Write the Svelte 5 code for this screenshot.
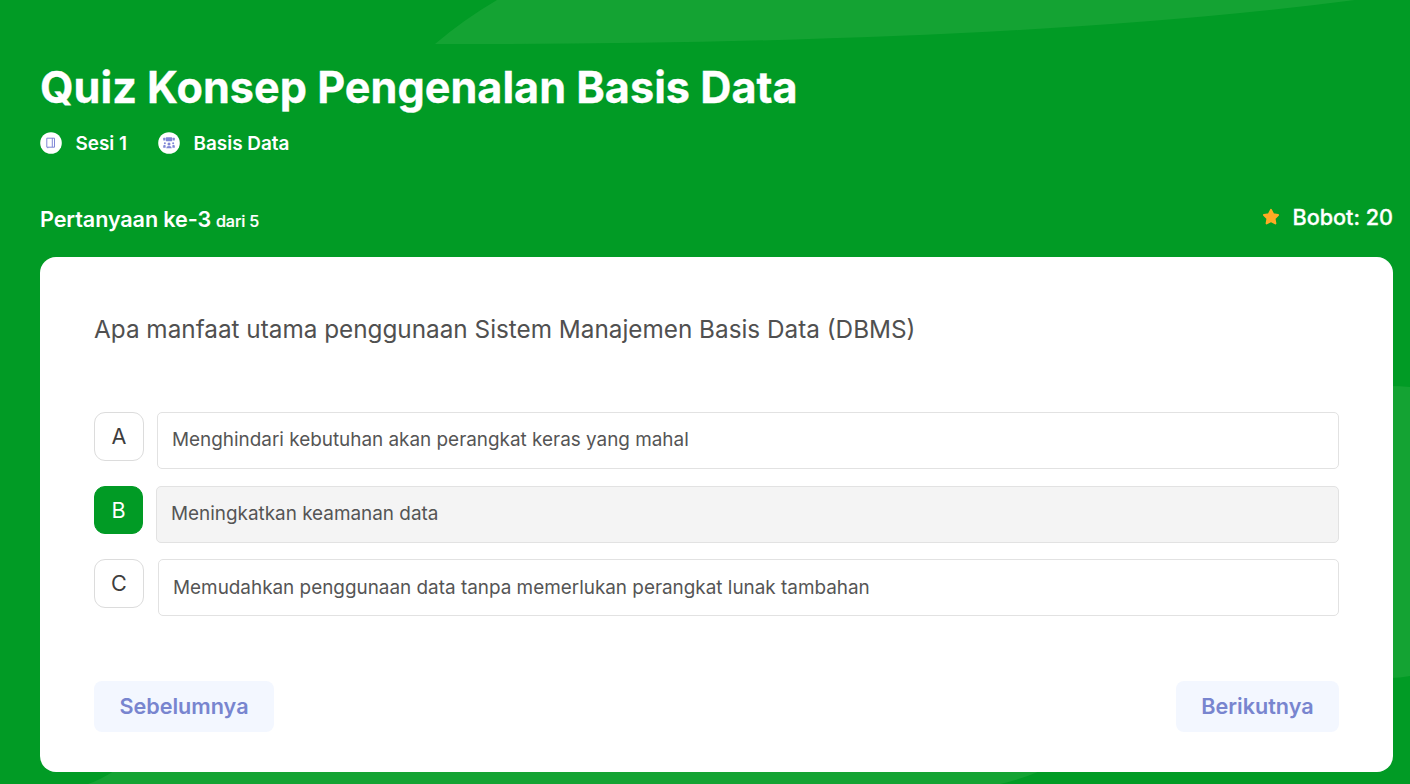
<script>
  const options = [
    { key: 'A', text: 'Menghindari kebutuhan akan perangkat keras yang mahal' },
    { key: 'B', text: 'Meningkatkan keamanan data' },
    { key: 'C', text: 'Memudahkan penggunaan data tanpa memerlukan perangkat lunak tambahan' }
  ];
  let selected = $state('B');
</script>

<main class="page">
  <svg class="backdrop" viewBox="0 0 1410 784" aria-hidden="true">
    <path d="M497 0 Q463 20 435 44 Q1010 45 1355 0Z" />
    <path d="M1390 386 Q1400 386 1410 387 V676 Q1400 678 1390 678Z" />
    <path d="M88 784 Q100 780 114 771 H1040 Q1022 779 1000 784Z" />
  </svg>

  <header>
    <h1>Quiz Konsep Pengenalan Basis Data</h1>
    <div class="meta">
      <span class="tag">
        <svg class="badge" viewBox="0 0 22 22" aria-hidden="true">
          <circle cx="11" cy="11" r="10.8" fill="#fff" />
          <path d="M6.8 6.2H14.5V15.2H6.8Z M12.3 6V15.2 M7.8 15.2V16.2" fill="none" stroke="#7f87d6" stroke-width="1" />
        </svg>
        Sesi 1
      </span>
      <span class="tag">
        <svg class="badge" viewBox="0 0 22 22" aria-hidden="true">
          <circle cx="11" cy="11" r="10.8" fill="#fff" />
          <g fill="#7f87d6">
            <rect x="7.8" y="5.2" width="6.4" height="4" rx="0.6" />
            <rect x="5.2" y="5.8" width="2.2" height="2.8" rx="0.5" />
            <rect x="14.6" y="5.8" width="2.2" height="2.8" rx="0.5" />
            <circle cx="11" cy="11.9" r="1.5" />
            <circle cx="6.9" cy="11.2" r="1" />
            <circle cx="15.1" cy="11.2" r="1" />
            <path d="M8.2 16.3Q8.4 14 11 14T13.8 16.3Z M5.2 15.8V13.5Q6 12.5 7.6 13.2V15.8Z M16.8 15.8V13.5Q16 12.5 14.4 13.2V15.8Z" />
          </g>
        </svg>
        Basis Data
      </span>
    </div>
    <div class="status">
      <p class="progress">Pertanyaan ke-3 <small>dari 5</small></p>
      <p class="weight">
        <svg class="star" viewBox="0 0 18 18" aria-hidden="true">
          <path d="M9 1.9 11.2 6.3 16 7 12.5 10.5 13.4 15.4 9 13.1 4.6 15.4 5.5 10.5 2 7 6.8 6.3Z" fill="#ffaa25" stroke="#ffaa25" stroke-width="2" stroke-linejoin="round" />
        </svg>
        Bobot: 20
      </p>
    </div>
  </header>

  <section class="card">
    <h2>Apa manfaat utama penggunaan Sistem Manajemen Basis Data (DBMS)</h2>
    <div class="options">
      {#each options as option (option.key)}
        <button class="option" class:selected={selected === option.key} class:last={option.key === 'C'} onclick={() => (selected = option.key)}>
          <span class="letter">{option.key}</span>
          <span class="answer">{option.text}</span>
        </button>
      {/each}
    </div>
    <nav>
      <button class="step">Sebelumnya</button>
      <button class="step">Berikutnya</button>
    </nav>
  </section>
</main>

<style>
  :global(body) { margin: 0; }
  .page {
    position: relative;
    box-sizing: border-box;
    height: 784px;
    padding: 61px 17px 0 40px;
    overflow: hidden;
    background: #019b25;
    color: #fff;
    font-family: Inter, sans-serif;
  }
  .backdrop { position: absolute; inset: 0; width: 1410px; height: 784px; fill: #14a333; }
  header, .card { position: relative; }
  h1 { margin: 0; font-size: 43.2px; line-height: 52px; font-weight: 700; white-space: nowrap; -webkit-text-stroke: 0.3px #fff; }
  .meta { display: flex; gap: 31px; margin-top: 18px; height: 24px; }
  .tag { display: flex; align-items: center; gap: 13.5px; font-size: 18.9px; font-weight: 600; }
  .badge { width: 22px; height: 22px; }
  .status { display: flex; justify-content: space-between; margin-top: 48px; height: 54px; }
  p { margin: 0; }
  .progress { padding-top: 2px; font-size: 21.6px; line-height: 28px; font-weight: 600; letter-spacing: -0.1px; }
  small { margin-left: -0.5px; font-size: 16.2px; font-weight: 500; letter-spacing: -0.15px; -webkit-text-stroke: 0.2px #fff; }
  .weight { display: flex; align-items: center; gap: 12px; height: 28px; font-size: 21.6px; font-weight: 500; -webkit-text-stroke: 0.3px #fff; }
  .star { width: 18px; height: 18px; }
  .card { box-sizing: border-box; height: 515px; padding: 56px 54px 0; border-radius: 16px; background: #fff; }
  h2 { margin: 0; color: #505050; font-size: 24.3px; line-height: 32px; font-weight: 400; white-space: nowrap; }
  .options { display: flex; flex-direction: column; gap: 17px; margin-top: 67px; }
  button { margin: 0; border: 0; padding: 0; background: none; font: inherit; }
  .option { display: flex; align-items: flex-start; gap: 13px; height: 57px; text-align: left; }
  .letter {
    display: flex;
    align-items: center;
    justify-content: center;
    box-sizing: border-box;
    width: 50px;
    height: 49px;
    padding-bottom: 1px;
    border: 1px solid #dcdcdc;
    border-radius: 11px;
    color: #3d3d3d;
    font-size: 21.6px;
  }
  .answer {
    display: flex;
    flex: 1;
    align-items: center;
    box-sizing: border-box;
    height: 57px;
    padding: 0 14px 2px;
    border: 1px solid #e2e2e2;
    border-radius: 5px;
    color: #555;
    font-size: 18.9px;
    white-space: nowrap;
  }
  .selected .letter { width: 49px; height: 48px; padding-bottom: 0; border-color: #019b25; background: #019b25; color: #fff; }
  .selected .answer { background: #f4f4f4; }
  .last { gap: 14px; margin-top: -1px; }
  .last .answer { padding-bottom: 0; }
  nav { display: flex; justify-content: space-between; margin-top: 65px; }
  .step { height: 51px; padding: 0 25.4px 1px; border-radius: 8px; background: #f3f7ff; color: #7885cf; font-size: 21.6px; font-weight: 600; }
</style>
